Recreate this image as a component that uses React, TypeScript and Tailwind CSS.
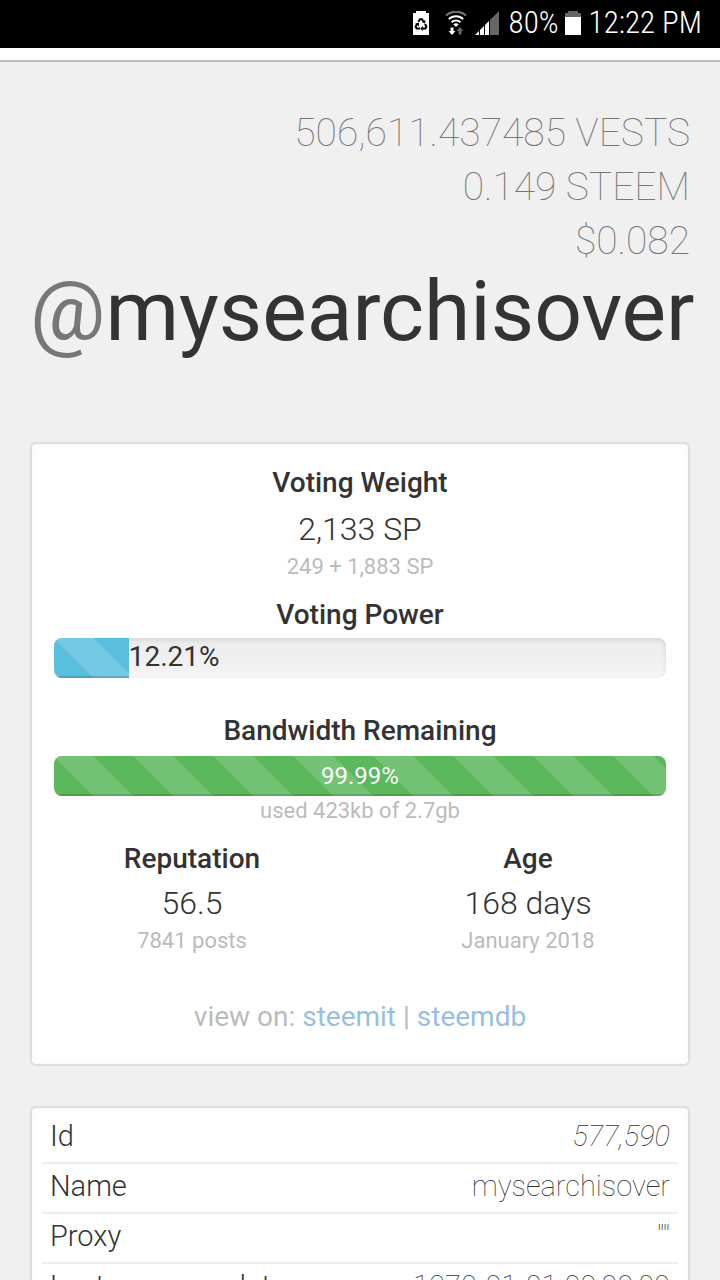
import type { ReactNode } from "react";
import clsx from "clsx";

const BALANCES = ["506,611.437485 VESTS", "0.149 STEEM", "$0.082"];

const ACCOUNT_ROWS = [
  { label: "Id", value: "577,590", italic: true },
  { label: "Name", value: "mysearchisover" },
  { label: "Proxy", value: '""' },
  { label: "Last owner update", value: "1970-01-01 00:00:00" },
];

const STRIPES =
  "bg-[linear-gradient(45deg,rgba(255,255,255,0.15)_25%,transparent_25%,transparent_50%,rgba(255,255,255,0.15)_50%,rgba(255,255,255,0.15)_75%,transparent_75%,transparent)] bg-[length:80px_80px]";

function RecycleBatteryIcon() {
  return (
    <svg viewBox="0 0 16 24" className="h-6 w-4" aria-hidden="true">
      <path d="M0 2h3V0h10v2h3v22H0z" fill="#fff" />
      <g fill="none" stroke="#000" strokeWidth="2">
        <path d="M5.400 10.800 7 8.200h2l1.500 2.600" />
        <path d="m12 13 1.400 2.600-1 1.900H9.500" />
        <path d="M7 17.500H3.600l-1-1.900 1.600-2.800" />
      </g>
      <path d="m12.400 9-.4 3.600-3.200-1.600zM9.800 15v5l-2.600-2.500zM2 12.800l4-1.300v3.800z" fill="#000" />
    </svg>
  );
}

function WifiIcon() {
  return (
    <svg viewBox="0 0 22 24" className="h-6 w-[22px]" aria-hidden="true">
      <g fill="none" strokeWidth="2">
        <path d="M1 4.500C6.500-.6 15.500-.6 21 4.500" stroke="#777" />
        <path d="M3.800 8c4-3.800 10.400-3.800 14.400 0" stroke="#fff" />
        <path d="M6.600 11.200c2.500-2.300 6.300-2.300 8.800 0" stroke="#fff" />
      </g>
      <path d="M8.300 13.400c1.500-1.400 3.900-1.400 5.400 0L11 16z" fill="#fff" />
      <path d="M5.500 16.500h3V20h2L7 24l-3.500-4h2z" fill="#fff" />
      <path d="M13.500 23.500V20h-2l3.500-4 3.500 4h-2v3.500z" fill="#666" />
    </svg>
  );
}

function SignalIcon() {
  return (
    <svg viewBox="0 0 24 24" className="h-6 w-6" aria-hidden="true">
      <path d="M0 24l4-4v4zM5 24v-5l4-4v9zM10 24V14l4-4v14z" fill="#fff" />
      <path d="M15 24V9l9-9v24z" fill="#666" />
    </svg>
  );
}

function BatteryIcon() {
  return (
    <svg viewBox="0 0 16 24" className="h-6 w-4" aria-hidden="true">
      <path d="M0 2h3V0h10v2h3v5H0z" fill="#666" />
      <path d="M0 6h16v18H0z" fill="#fff" />
    </svg>
  );
}

function StatusBar() {
  return (
    <div className="flex h-12 items-center justify-end bg-black pb-0.5 pr-[18px] font-['Roboto_Condensed','Roboto',sans-serif] text-[31px] font-light text-white">
      <RecycleBatteryIcon />
      <span className="ml-4 flex">
        <WifiIcon />
      </span>
      <span className="ml-2 flex">
        <SignalIcon />
      </span>
      <span className="ml-2.5 mr-1.5">80%</span>
      <BatteryIcon />
      <span className="ml-2">12:22 PM</span>
    </div>
  );
}

function Panel({ className, children }: { className?: string; children: ReactNode }) {
  return (
    <section
      className={clsx(
        "mx-[30px] mt-10 rounded-md border-2 border-[#ddd] bg-white shadow-[inset_0_0_10px_rgba(0,0,0,0.04)]",
        className,
      )}
    >
      {children}
    </section>
  );
}

function Heading({ className, children }: { className?: string; children: ReactNode }) {
  return <h2 className={clsx("text-[28px]/[42px] font-medium", className)}>{children}</h2>;
}

function Value({ className, children }: { className?: string; children: ReactNode }) {
  return <p className={clsx("text-[32px]/[46px] font-light", className)}>{children}</p>;
}

function Note({ children }: { children: ReactNode }) {
  return <p className="mt-0.5 text-[22px]/[26px] text-[#bbb]">{children}</p>;
}

function Progress({ label, value, color, className, children }: {
  label: string;
  value: number;
  color: string;
  className?: string;
  children?: ReactNode;
}) {
  return (
    <div
      role="progressbar"
      aria-label={label}
      aria-valuenow={value}
      aria-valuemin={0}
      aria-valuemax={100}
      className={clsx(
        "flex h-10 overflow-hidden rounded-lg bg-linear-to-b from-[#ebebeb] to-[#f5f5f5] shadow-[inset_0_2px_4px_rgba(0,0,0,0.1)]",
        className,
      )}
    >
      <div
        className={clsx(
          "shrink-0 text-center text-2xl/10 text-white shadow-[inset_0_-2px_0_rgba(0,0,0,0.15)]",
          STRIPES,
          color,
        )}
        style={{ width: `${value}%` }}
      >
        {value > 50 && `${value}%`}
      </div>
      {children}
    </div>
  );
}

export default function App() {
  return (
    <div className="h-screen overflow-hidden bg-[#f0f0f0] font-['Roboto',sans-serif] text-[#333]">
      <StatusBar />
      <div className="h-3.5 border-b-2 border-[#bbb] bg-white" />

      <header className="mx-[30px] border-b-2 border-[#eee] pb-11 pt-11">
        <div className="text-right text-[39px]/[54px] font-thin text-[#777]">
          {BALANCES.map((balance) => (
            <p key={balance}>{balance}</p>
          ))}
        </div>
        <h1 className="whitespace-nowrap text-[84px]/[88px]">
          <span className="text-[#777]">@</span>mysearchisover
        </h1>
      </header>

      <Panel className="px-[22px] pb-[26px] pt-[18px] text-center">
        <Heading>Voting Weight</Heading>
        <Value className="mt-0.5">2,133 SP</Value>
        <Note>249 + 1,883 SP</Note>

        <Heading className="mt-3.5">Voting Power</Heading>
        <Progress label="Voting Power" value={12.21} color="bg-[#5bc0de]" className="mt-0.5">
          <span className="text-[28px]/[38px]">12.21%</span>
        </Progress>

        <Heading className="mt-8">Bandwidth Remaining</Heading>
        <Progress label="Bandwidth Remaining" value={99.99} color="bg-[#5cb85c]" className="mt-1" />
        <Note>used 423kb of 2.7gb</Note>

        <div className="mt-3.5 grid grid-cols-2 gap-15">
          <div>
            <Heading>Reputation</Heading>
            <Value>56.5</Value>
            <Note>7841 posts</Note>
          </div>
          <div>
            <Heading>Age</Heading>
            <Value>168 days</Value>
            <Note>January 2018</Note>
          </div>
        </div>

        <p className="mt-[42px] text-[28px]/[42px] text-[#bbb]">
          view on:{" "}
          <a href="#steemit" className="text-[#99bfe0]">steemit</a>
          {" | "}
          <a href="#steemdb" className="text-[#99bfe0]">steemdb</a>
        </p>
      </Panel>

      <Panel className="px-2.5 pt-1.5">
        <table className="w-full text-[29px]/10">
          <tbody>
            {ACCOUNT_ROWS.map((row) => (
              <tr key={row.label} className="border-b-2 border-[#eee]">
                <th scope="row" className="px-2 pb-1.5 pt-0.5 text-left font-light">{row.label}</th>
                <td className={clsx("px-2 pb-1.5 pt-0.5 text-right font-thin", row.italic && "italic")}>{row.value}</td>
              </tr>
            ))}
          </tbody>
        </table>
      </Panel>
    </div>
  );
}
